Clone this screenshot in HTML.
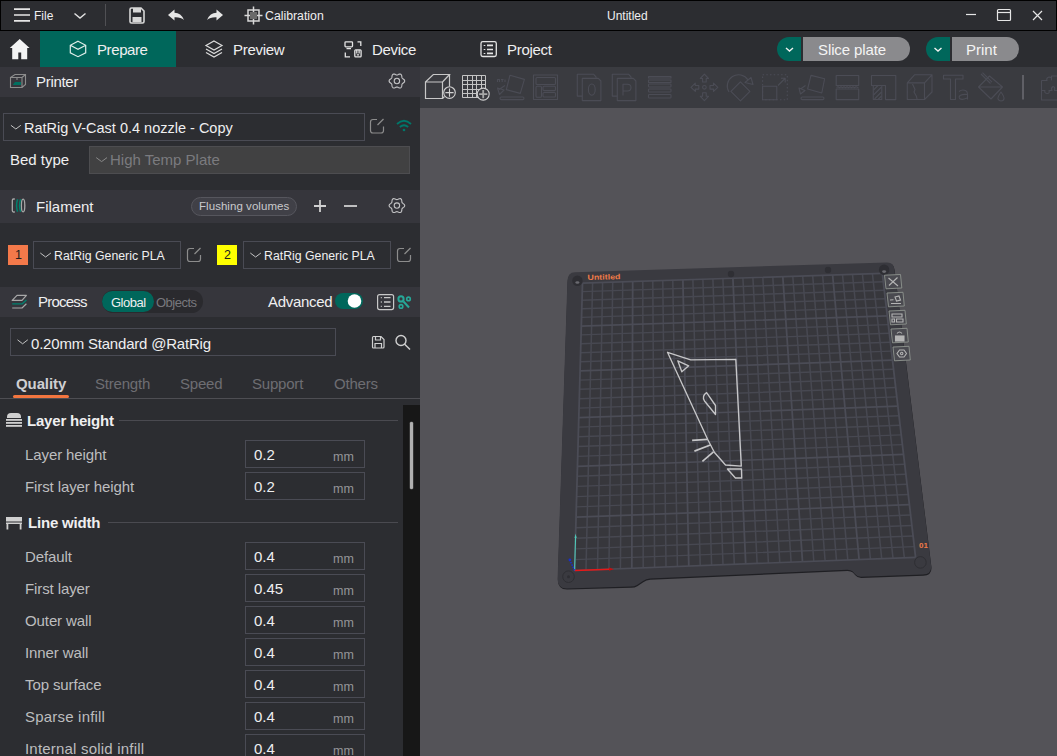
<!DOCTYPE html>
<html><head><meta charset="utf-8">
<style>
*{box-sizing:border-box;margin:0;padding:0}
html,body{width:1057px;height:756px;overflow:hidden;background:#000}
body{position:relative;font-family:"Liberation Sans",sans-serif;color:#efeff0}
.a{position:absolute}
.t{position:absolute;white-space:nowrap;line-height:1}
svg{position:absolute;overflow:visible}
</style></head><body>
<!-- title bar -->
<div class="a" style="left:1px;top:1px;width:1055px;height:29px;background:#2c2d31"></div>
<!-- tab bar -->
<div class="a" style="left:0;top:31px;width:1057px;height:36px;background:#2c2d31"></div>
<!-- sidebar bg -->
<div class="a" style="left:0;top:67px;width:420px;height:689px;background:#2c2d31"></div>
<!-- viewport -->
<div class="a" style="left:420px;top:67px;width:637px;height:689px;background:#545358"></div>
<div class="a" style="left:420px;top:67px;width:637px;height:41px;background:#3a3b40"></div>

<svg style="left:0;top:0" width="1057" height="31"><g stroke="#e6e6e6" stroke-width="2" fill="none"><path d="M14 9.1H30M14 15H30M14 20.8H30" stroke-width="1.7"/></g><path d="M74.5 13.5L80 18L85.5 13.5" stroke="#e0e0e0" stroke-width="1.5" fill="none"/><path d="M105.5 4V26" stroke="#505054" stroke-width="1"/><g fill="none" stroke="#d8d8d8" stroke-width="1.6"><path d="M130 9.5Q130 8 131.5 8H141L144 11V21.5Q144 23 142.5 23H131.5Q130 23 130 21.5Z"/></g><rect x="133" y="8" width="8" height="4.5" fill="#d8d8d8"/><rect x="132.5" y="17" width="9" height="5" fill="#d8d8d8"/><path d="M168 15L174.5 9.5V12.8Q181 12.8 184 20Q180.5 16.8 174.5 17.2V20.5Z" fill="#e6e6e6"/><path d="M223 15L216.5 9.5V12.8Q210 12.8 207 20Q210.5 16.8 216.5 17.2V20.5Z" fill="#e6e6e6"/><g fill="none" stroke="#d8d8d8" stroke-width="1.5"><rect x="248" y="10" width="11" height="11"/><path d="M253.5 6.5V24.5M244.5 15.5H262.5"/></g><rect x="250" y="12" width="7" height="7" fill="#6a6a6a"/><path d="M966 14.5H976" stroke="#e6e6e6" stroke-width="1.2"/><rect x="997.5" y="9.5" width="13" height="11" rx="1" fill="none" stroke="#e6e6e6" stroke-width="1.2"/><path d="M997.5 12.5H1010.5" stroke="#e6e6e6" stroke-width="1.2"/><path d="M1033 11L1042 20M1042 11L1033 20" stroke="#e6e6e6" stroke-width="1.2"/></svg>
<div class="t" style="left:34px;top:9.84px;font-size:12px;color:#efeff0;font-weight:400;">File</div>
<div class="t" style="left:265px;top:9.59px;font-size:12.3px;color:#efeff0;font-weight:400;">Calibration</div>
<div class="t" style="left:607px;top:9.84px;font-size:12px;color:#efeff0;font-weight:400;">Untitled</div>
<div class="a" style="left:40px;top:31px;width:136px;height:36px;background:#00675b;"></div>
<svg style="left:0;top:31px" width="600" height="36"><path d="M19.7 8L9.8 17H12.2V28.2H18.3V21.5H21.2V28.2H27.2V17H29.6Z" fill="#f4f4f4"/><g fill="none" stroke="#dfeeea" stroke-width="1.2"><path d="M78 10.3L85.7 14.3V21.9L78 25.7L70.3 21.9V14.3Z M70.3 14.3L78 18.3L85.7 14.3"/></g><g fill="none" stroke="#dcdcdc" stroke-width="1.2"><path d="M214 10L222 14.5L214 19L206 14.5Z"/><path d="M206 18L214 22.5L222 18M206 21.5L214 26L222 21.5"/></g><g fill="none" stroke="#e4e4e4" stroke-width="1.3"><rect x="345" y="10.8" width="7.5" height="5" rx="0.8"/><path d="M346.5 17.7H351M357.5 10.8H360.8V15M345.3 21.5V25.8H350"/><rect x="354.8" y="18.8" width="6.3" height="7" rx="0.9"/><path d="M356.8 19V22.5M359.1 19V22.5M356.8 23.8H359.1"/></g><g fill="none" stroke="#e4e4e4" stroke-width="1.3"><rect x="481" y="10.6" width="15.3" height="14.9" rx="1.8"/><path d="M484.5 13.9V14.9M484.5 18V19M484.5 21.9V22.9M487 14.4H493M487 18.5H493M487 22.4H493" stroke-width="1.6"/></g></svg>
<div class="t" style="left:97px;top:42.30px;font-size:15px;color:#efeff0;font-weight:400;letter-spacing:-0.4px">Prepare</div>
<div class="t" style="left:233px;top:42.30px;font-size:15px;color:#efeff0;font-weight:400;letter-spacing:-0.3px">Preview</div>
<div class="t" style="left:372px;top:42.30px;font-size:15px;color:#efeff0;font-weight:400;letter-spacing:-0.3px">Device</div>
<div class="t" style="left:507px;top:42.30px;font-size:15px;color:#efeff0;font-weight:400;letter-spacing:-0.3px">Project</div>
<div class="a" style="left:777px;top:37px;width:30px;height:24px;background:#00675b;border-radius:12px 0 0 12px"></div>
<div class="a" style="left:802px;top:37px;width:108px;height:24px;background:#8a8a8d;border-radius:0 12px 12px 0"></div>
<div class="a" style="left:801px;top:37px;width:1.5px;height:24px;background:#2c2d31;"></div>
<div class="a" style="left:926px;top:37px;width:30px;height:24px;background:#00675b;border-radius:12px 0 0 12px"></div>
<div class="a" style="left:951px;top:37px;width:68px;height:24px;background:#8a8a8d;border-radius:0 12px 12px 0"></div>
<div class="a" style="left:950px;top:37px;width:1.5px;height:24px;background:#2c2d31;"></div>
<svg style="left:0;top:0" width="1057" height="70"><g fill="none" stroke="#f0f0f0" stroke-width="1.4"><path d="M786 48L789.5 51L793 48"/><path d="M934.5 48L938 51L941.5 48"/></g></svg>
<div class="t" style="left:818px;top:42.30px;font-size:15px;color:#f4f4f4;font-weight:400;letter-spacing:-0.1px">Slice plate</div>
<div class="t" style="left:966px;top:42.30px;font-size:15px;color:#f4f4f4;font-weight:400;">Print</div>
<div class="a" style="left:0px;top:67px;width:420px;height:30px;background:#36363c;"></div>
<div class="a" style="left:0px;top:190px;width:420px;height:33px;background:#36363c;"></div>
<div class="a" style="left:0px;top:287px;width:420px;height:30px;background:#36363c;"></div>
<svg style="left:0;top:0" width="420" height="330"><g fill="none" stroke="#8c8c8c" stroke-width="1.1"><path d="M10.5 77.5H22V87.5H10.5Z M10.5 77.5L15 74.5H25.5V84.5L22 87.5M22 77.5L25.5 74.5"/><path d="M17 77.5V80"/></g><path d="M13 84.5L15 82H21V85H13Z" fill="#007060"/><g transform="translate(396.9,81)" fill="none" stroke="#c4c4c6" stroke-width="1.1"><path d="M7.80 0.00L7.65 0.67L7.24 1.28L6.66 1.79L6.06 2.21L5.55 2.59L5.20 3.00L5.01 3.51L4.94 4.15L4.88 4.88L4.72 5.63L4.40 6.29L3.90 6.75L3.25 6.96L2.51 6.91L1.79 6.66L1.12 6.35L0.53 6.10L0.00 6.00L-0.53 6.10L-1.12 6.35L-1.79 6.66L-2.51 6.91L-3.25 6.96L-3.90 6.75L-4.40 6.29L-4.72 5.63L-4.88 4.88L-4.94 4.15L-5.01 3.51L-5.20 3.00L-5.55 2.59L-6.06 2.21L-6.66 1.79L-7.24 1.28L-7.65 0.67L-7.80 0.00L-7.65 -0.67L-7.24 -1.28L-6.66 -1.79L-6.06 -2.21L-5.55 -2.59L-5.20 -3.00L-5.01 -3.51L-4.94 -4.15L-4.88 -4.88L-4.72 -5.63L-4.40 -6.29L-3.90 -6.75L-3.25 -6.96L-2.51 -6.91L-1.79 -6.66L-1.12 -6.35L-0.53 -6.10L-0.00 -6.00L0.53 -6.10L1.12 -6.35L1.79 -6.66L2.51 -6.91L3.25 -6.96L3.90 -6.75L4.40 -6.29L4.72 -5.63L4.88 -4.88L4.94 -4.15L5.01 -3.51L5.20 -3.00L5.55 -2.59L6.06 -2.21L6.66 -1.79L7.24 -1.28L7.65 -0.67L7.80 -0.00Z"/><circle r="2.7"/></g><rect x="3.5" y="113.5" width="361" height="27" fill="none" stroke="#4a4b54"/><path d="M10.9 125.3L15.85 129L20.8 125.3" fill="none" stroke="#c4c4c4" stroke-width="1"/><g fill="none" stroke="#8c8c8c" stroke-width="1.2"><path d="M377 119.5H373Q370.5 119.5 370.5 122V130.5Q370.5 133 373 133H381Q383.5 133 383.5 130.5V126.5"/><path d="M377.5 125L383.5 119"/></g><g fill="none" stroke="#00776a" stroke-width="1.8"><path d="M397 124Q404 117.5 411 124"/><path d="M399.8 127Q404 123.5 408.2 127"/></g><circle cx="404" cy="130" r="1.3" fill="#00776a"/><rect x="89.5" y="146.5" width="320" height="27" fill="#414142" stroke="#4d4d50"/><path d="M96.2 157.6L101.6 161.6L107 157.6" fill="none" stroke="#8a8a8a" stroke-width="1"/><g fill="none" stroke-width="1.3"><path d="M14.8 199H13.5Q12.3 199 12.3 200.5V210.5Q12.3 212 13.5 212H14.8" stroke="#a8a8a8"/><ellipse cx="23.1" cy="205.5" rx="1.7" ry="6.4" stroke="#a8a8a8"/><path d="M17.6 199.2Q15.6 205.5 17.6 211.8M20.6 199.2Q18.6 205.5 20.6 211.8" stroke="#00806e" stroke-width="1.5"/></g><rect x="191.5" y="197.5" width="105" height="18" rx="9" fill="#404047" stroke="#56565d"/><path d="M320 200V212M314 206H326" stroke="#d0d0d0" stroke-width="1.8"/><path d="M344 206H357" stroke="#d0d0d0" stroke-width="1.8"/><g transform="translate(396.9,205.6)" fill="none" stroke="#c4c4c6" stroke-width="1.1"><path d="M7.80 0.00L7.65 0.67L7.24 1.28L6.66 1.79L6.06 2.21L5.55 2.59L5.20 3.00L5.01 3.51L4.94 4.15L4.88 4.88L4.72 5.63L4.40 6.29L3.90 6.75L3.25 6.96L2.51 6.91L1.79 6.66L1.12 6.35L0.53 6.10L0.00 6.00L-0.53 6.10L-1.12 6.35L-1.79 6.66L-2.51 6.91L-3.25 6.96L-3.90 6.75L-4.40 6.29L-4.72 5.63L-4.88 4.88L-4.94 4.15L-5.01 3.51L-5.20 3.00L-5.55 2.59L-6.06 2.21L-6.66 1.79L-7.24 1.28L-7.65 0.67L-7.80 0.00L-7.65 -0.67L-7.24 -1.28L-6.66 -1.79L-6.06 -2.21L-5.55 -2.59L-5.20 -3.00L-5.01 -3.51L-4.94 -4.15L-4.88 -4.88L-4.72 -5.63L-4.40 -6.29L-3.90 -6.75L-3.25 -6.96L-2.51 -6.91L-1.79 -6.66L-1.12 -6.35L-0.53 -6.10L-0.00 -6.00L0.53 -6.10L1.12 -6.35L1.79 -6.66L2.51 -6.91L3.25 -6.96L3.90 -6.75L4.40 -6.29L4.72 -5.63L4.88 -4.88L4.94 -4.15L5.01 -3.51L5.20 -3.00L5.55 -2.59L6.06 -2.21L6.66 -1.79L7.24 -1.28L7.65 -0.67L7.80 -0.00Z"/><circle r="2.7"/></g><rect x="8" y="245" width="20" height="20" fill="#f4794a"/><rect x="33.5" y="241.5" width="147" height="27" fill="none" stroke="#4a4b54"/><path d="M40.3 253L45.6 257L50.9 253" fill="none" stroke="#c4c4c4" stroke-width="1"/><g fill="none" stroke="#8c8c8c" stroke-width="1.2"><path d="M194 248.5H190Q187.5 248.5 187.5 251V259Q187.5 261.5 190 261.5H198Q200.5 261.5 200.5 259V255"/><path d="M194.5 254L200.5 248"/></g><rect x="217" y="245" width="20" height="20" fill="#ffff00"/><rect x="243.5" y="241.5" width="147" height="27" fill="none" stroke="#4a4b54"/><path d="M250.3 253L255.6 257L260.9 253" fill="none" stroke="#c4c4c4" stroke-width="1"/><g fill="none" stroke="#8c8c8c" stroke-width="1.2"><path d="M404 248.5H400Q397.5 248.5 397.5 251V259Q397.5 261.5 400 261.5H408Q410.5 261.5 410.5 259V255"/><path d="M404.5 254L410.5 248"/></g><g fill="none" stroke-width="1.2" stroke-linejoin="round"><path d="M12.2 300.4L17 295.3H26.4L22 300.4Z" stroke="#a8a8a8"/><path d="M12.2 303.9H22L26.4 299.9" stroke="#00806e" stroke-width="1.4"/><path d="M12.2 308H22L26.4 303.8" stroke="#a8a8a8"/></g><rect x="102" y="290" width="101" height="23" rx="11.5" fill="#2a2a2e"/><rect x="102" y="291" width="52" height="21" rx="10.5" fill="#00675b"/><rect x="335" y="293" width="28" height="16" rx="8" fill="#00675b"/><circle cx="354.5" cy="301" r="6.8" fill="#ffffff"/><g fill="none" stroke="#c8c8c8" stroke-width="1.2"><rect x="377.6" y="294.6" width="16" height="15" rx="2"/><path d="M380.8 297.6H381.8M380.8 302H381.8M380.8 306.3H381.8M384 297.6H390.5M384 302H390.5M384 306.3H390.5" stroke-width="1.3"/></g><g fill="none" stroke="#26a898"><circle cx="401" cy="298.9" r="2.6" stroke-width="2"/><circle cx="408.5" cy="298.9" r="1.8" stroke-width="1.6"/><circle cx="401" cy="306.4" r="1.8" stroke-width="1.6"/><path d="M403.5 301.5L409 307.5" stroke-width="2"/></g></svg>
<div class="t" style="left:36px;top:74.30px;font-size:15px;color:#efeff0;font-weight:400;letter-spacing:-0.3px">Printer</div>
<div class="t" style="left:24px;top:120.73px;font-size:14.5px;color:#efeff0;font-weight:400;">RatRig V-Cast 0.4 nozzle - Copy</div>
<div class="t" style="left:10px;top:152.30px;font-size:15px;color:#efeff0;font-weight:400;">Bed type</div>
<div class="t" style="left:110px;top:152.30px;font-size:15px;color:#7b7b7f;font-weight:400;">High Temp Plate</div>
<div class="t" style="left:36px;top:199.30px;font-size:15px;color:#efeff0;font-weight:400;">Filament</div>
<div class="t" style="left:199px;top:201.27px;font-size:11.5px;color:#c9c9cc;font-weight:400;letter-spacing:0.05px">Flushing volumes</div>
<div class="t" style="left:15px;top:249.42px;font-size:12.5px;color:#202020;font-weight:400;">1</div>
<div class="t" style="left:224px;top:249.42px;font-size:12.5px;color:#202020;font-weight:400;">2</div>
<div class="t" style="left:54px;top:249.59px;font-size:12.3px;color:#efeff0;font-weight:400;">RatRig Generic PLA</div>
<div class="t" style="left:264px;top:249.59px;font-size:12.3px;color:#efeff0;font-weight:400;">RatRig Generic PLA</div>
<div class="t" style="left:38px;top:294.30px;font-size:15px;color:#efeff0;font-weight:400;letter-spacing:-0.8px">Process</div>
<div class="t" style="left:111px;top:295.50px;font-size:13px;color:#efeff0;font-weight:400;letter-spacing:-0.5px">Global</div>
<div class="t" style="left:156px;top:295.50px;font-size:13px;color:#78787d;font-weight:400;letter-spacing:-0.5px">Objects</div>
<div class="t" style="left:268px;top:294.30px;font-size:15px;color:#efeff0;font-weight:400;letter-spacing:-0.3px">Advanced</div>
<svg style="left:0;top:320px" width="420" height="440"><rect x="10.5" y="8.5" width="325" height="27" fill="none" stroke="#4a4b54"/><path d="M17.5 19.8L22.6 23.8L27.8 19.8" fill="none" stroke="#c4c4c4" stroke-width="1"/><g fill="none" stroke="#d0d0d0" stroke-width="1.2"><path d="M372.5 17.5Q372.5 16.5 373.5 16.5H381L384 19.5V27Q384 28 383 28H373.5Q372.5 28 372.5 27Z"/><path d="M375.5 16.5V20H380.5V16.5M375 28V23.5H381.5V28"/></g><g fill="none" stroke="#d0d0d0" stroke-width="1.4"><circle cx="401" cy="20.5" r="5"/><path d="M404.7 24.2L410 29.5"/></g><rect x="13" y="75" width="56" height="3.2" rx="1.6" fill="#f2753f"/><path d="M0 78.5H420" stroke="#4e4e53" stroke-width="1"/></svg>
<div class="t" style="left:31px;top:336.30px;font-size:15px;color:#efeff0;font-weight:400;letter-spacing:-0.2px">0.20mm Standard @RatRig</div>
<div class="t" style="left:16px;top:376.30px;font-size:15px;color:#cfcfd1;font-weight:700;letter-spacing:-0.1px">Quality</div>
<div class="t" style="left:95px;top:376.30px;font-size:15px;color:#6e6e73;font-weight:400;letter-spacing:-0.2px">Strength</div>
<div class="t" style="left:180px;top:376.30px;font-size:15px;color:#6e6e73;font-weight:400;letter-spacing:-0.2px">Speed</div>
<div class="t" style="left:252px;top:376.30px;font-size:15px;color:#6e6e73;font-weight:400;letter-spacing:-0.2px">Support</div>
<div class="t" style="left:334px;top:376.30px;font-size:15px;color:#6e6e73;font-weight:400;letter-spacing:-0.2px">Others</div>
<div class="a" style="left:403px;top:405px;width:17px;height:351px;background:#171717;"></div>
<div class="a" style="left:410.3px;top:422px;width:2.6px;height:67px;background:#b0b0b0;border-radius:1.3px;box-shadow:0 0 0 0.5px #555"></div>
<svg style="left:0;top:400px" width="403" height="356"><g fill="#d0d0d0"><path d="M7 17Q7 13 11 13H17Q21 13 21 17V18H7Z"/><rect x="6" y="19" width="16" height="1.8"/><rect x="6" y="22" width="16" height="1.8"/><rect x="6" y="25" width="16" height="1.8"/></g><path d="M119 20.5H398" stroke="#4a4a50" stroke-width="1"/><g fill="#d0d0d0"><rect x="6" y="117" width="16" height="4.5"/><rect x="6" y="122.5" width="16" height="1.5"/><rect x="6.5" y="124" width="1.8" height="5.5"/><rect x="19.7" y="124" width="1.8" height="5.5"/></g><path d="M108 122.5H398" stroke="#4a4a50" stroke-width="1"/></svg>
<div class="t" style="left:27px;top:413.30px;font-size:15px;color:#efeff0;font-weight:700;letter-spacing:-0.2px">Layer height</div>
<div class="t" style="left:28px;top:515.30px;font-size:15px;color:#efeff0;font-weight:700;letter-spacing:-0.2px">Line width</div>
<div class="t" style="left:25px;top:447.30px;font-size:15px;color:#bdbdbf;font-weight:400;letter-spacing:-0.1px">Layer height</div>
<div class="t" style="left:254px;top:447.30px;font-size:15px;color:#efeff0;font-weight:400;">0.2</div>
<div class="t" style="left:333px;top:451.42px;font-size:12.5px;color:#959598;font-weight:400;">mm</div>
<div class="t" style="left:25px;top:479.30px;font-size:15px;color:#bdbdbf;font-weight:400;letter-spacing:-0.1px">First layer height</div>
<div class="t" style="left:254px;top:479.30px;font-size:15px;color:#efeff0;font-weight:400;">0.2</div>
<div class="t" style="left:333px;top:483.42px;font-size:12.5px;color:#959598;font-weight:400;">mm</div>
<div class="t" style="left:25px;top:549.30px;font-size:15px;color:#bdbdbf;font-weight:400;letter-spacing:-0.1px">Default</div>
<div class="t" style="left:254px;top:549.30px;font-size:15px;color:#efeff0;font-weight:400;">0.4</div>
<div class="t" style="left:333px;top:553.42px;font-size:12.5px;color:#959598;font-weight:400;">mm</div>
<div class="t" style="left:25px;top:581.30px;font-size:15px;color:#bdbdbf;font-weight:400;letter-spacing:-0.1px">First layer</div>
<div class="t" style="left:254px;top:581.30px;font-size:15px;color:#efeff0;font-weight:400;">0.45</div>
<div class="t" style="left:333px;top:585.42px;font-size:12.5px;color:#959598;font-weight:400;">mm</div>
<div class="t" style="left:25px;top:613.30px;font-size:15px;color:#bdbdbf;font-weight:400;letter-spacing:-0.1px">Outer wall</div>
<div class="t" style="left:254px;top:613.30px;font-size:15px;color:#efeff0;font-weight:400;">0.4</div>
<div class="t" style="left:333px;top:617.42px;font-size:12.5px;color:#959598;font-weight:400;">mm</div>
<div class="t" style="left:25px;top:645.30px;font-size:15px;color:#bdbdbf;font-weight:400;letter-spacing:-0.1px">Inner wall</div>
<div class="t" style="left:254px;top:645.30px;font-size:15px;color:#efeff0;font-weight:400;">0.4</div>
<div class="t" style="left:333px;top:649.42px;font-size:12.5px;color:#959598;font-weight:400;">mm</div>
<div class="t" style="left:25px;top:677.30px;font-size:15px;color:#bdbdbf;font-weight:400;letter-spacing:-0.1px">Top surface</div>
<div class="t" style="left:254px;top:677.30px;font-size:15px;color:#efeff0;font-weight:400;">0.4</div>
<div class="t" style="left:333px;top:681.42px;font-size:12.5px;color:#959598;font-weight:400;">mm</div>
<div class="t" style="left:25px;top:709.30px;font-size:15px;color:#bdbdbf;font-weight:400;letter-spacing:0.2px">Sparse infill</div>
<div class="t" style="left:254px;top:709.30px;font-size:15px;color:#efeff0;font-weight:400;">0.4</div>
<div class="t" style="left:333px;top:713.42px;font-size:12.5px;color:#959598;font-weight:400;">mm</div>
<div class="t" style="left:25px;top:741.30px;font-size:15px;color:#bdbdbf;font-weight:400;letter-spacing:0.2px">Internal solid infill</div>
<div class="t" style="left:254px;top:741.30px;font-size:15px;color:#efeff0;font-weight:400;">0.4</div>
<div class="t" style="left:333px;top:745.42px;font-size:12.5px;color:#959598;font-weight:400;">mm</div>
<svg style="left:0;top:0" width="403" height="756"><rect x="245.5" y="440.5" width="119" height="27" fill="none" stroke="#4a4b54"/><rect x="245.5" y="472.5" width="119" height="27" fill="none" stroke="#4a4b54"/><rect x="245.5" y="542.5" width="119" height="27" fill="none" stroke="#4a4b54"/><rect x="245.5" y="574.5" width="119" height="27" fill="none" stroke="#4a4b54"/><rect x="245.5" y="606.5" width="119" height="27" fill="none" stroke="#4a4b54"/><rect x="245.5" y="638.5" width="119" height="27" fill="none" stroke="#4a4b54"/><rect x="245.5" y="670.5" width="119" height="27" fill="none" stroke="#4a4b54"/><rect x="245.5" y="702.5" width="119" height="27" fill="none" stroke="#4a4b54"/><rect x="245.5" y="734.5" width="119" height="27" fill="none" stroke="#4a4b54"/></svg>
<svg style="left:0;top:0" width="1057" height="756"><path d="M575 272.2 L887 262.4 Q894 262.3 894.4 269.5 L931.1 565.5 Q932 574.3 923 574.6 L861 576.8 Q857.5 576.9 855 574 L852.5 571.3 Q850.5 569.7 847 569.8 L650 578.6 Q646 578.8 643 581 L637 585 Q634.5 586.5 631 586.6 L567 588.4 Q557.4 588.6 557.6 578.5 L567.4 281 Q567.6 272.4 575 272.2 Z" fill="#1f1f23" transform="translate(0.3 1.2)"/><path d="M575 272.2 L887 262.4 Q894 262.3 894.4 269.5 L931.1 565.5 Q932 574.3 923 574.6 L861 576.8 Q857.5 576.9 855 574 L852.5 571.3 Q850.5 569.7 847 569.8 L650 578.6 Q646 578.8 643 581 L637 585 Q634.5 586.5 631 586.6 L567 588.4 Q557.4 588.6 557.6 578.5 L567.4 281 Q567.6 272.4 575 272.2 Z" fill="#3a3a40"/><path d="M585.5 283.1 L879.3 273.5 Q882.3 273.4 882.7 276.4 L915.6 554.3 Q915.8 557.2 912.6 557.4 L577.6 570.4 Q574.6 570.5 574.6 567.5 L582.4 286.2 Q582.5 283.2 585.5 283.1Z" fill="#37373c"/><path d="M582.3 291.6L883.3 281.8M582.0 300.2L884.3 290.2M581.8 308.8L885.3 298.7M581.6 317.4L886.3 307.2M581.1 334.9L888.3 324.6M580.8 343.8L889.3 333.3M580.6 352.8L890.4 342.2M580.3 361.8L891.4 351.1M579.8 380.1L893.5 369.2M579.6 389.3L894.6 378.3M579.3 398.7L895.7 387.5M579.1 408.1L896.8 396.9M578.5 427.1L899.0 415.7M578.3 436.8L900.1 425.2M578.0 446.5L901.2 434.9M577.7 456.4L902.4 444.6M577.2 476.3L904.7 464.3M576.9 486.4L905.9 474.2M576.6 496.6L907.0 484.3M576.4 506.9L908.2 494.5M575.8 527.7L910.6 515.0M575.5 538.2L911.9 525.5M575.2 548.9L913.1 536.0M574.9 559.6L914.3 546.6" stroke="#474851" stroke-width="1.45" fill="none"/><path d="M592.6 282.9L586.0 570.1M602.6 282.5L597.5 569.6M612.7 282.2L608.9 569.2M622.7 281.9L620.4 568.7M642.8 281.2L643.2 567.8M652.8 280.9L654.6 567.4M662.8 280.6L666.0 567.0M672.8 280.2L677.4 566.5M692.9 279.6L700.2 565.6M702.9 279.3L711.6 565.2M712.9 278.9L723.0 564.8M722.9 278.6L734.3 564.3M742.9 278.0L757.1 563.4M752.9 277.6L768.4 563.0M762.8 277.3L779.8 562.6M772.8 277.0L791.1 562.1M792.8 276.3L813.8 561.2M802.7 276.0L825.1 560.8M812.7 275.7L836.5 560.4M822.6 275.4L847.8 559.9M842.5 274.7L870.4 559.0M852.5 274.4L881.7 558.6M862.4 274.0L893.0 558.2M872.4 273.7L904.3 557.7" stroke="#474851" stroke-width="1.55" fill="none"/><path d="M582.5 283.2L882.3 273.4M581.3 326.1L887.3 315.9M580.1 370.9L892.5 360.1M578.8 417.6L897.9 406.2M577.5 466.3L903.5 454.4M576.1 517.2L909.4 504.7M574.6 570.5L915.6 557.3" stroke="#4b4c56" stroke-width="1.7" fill="none"/><path d="M582.5 283.2L574.6 570.5M632.7 281.6L631.8 568.3M682.9 279.9L688.8 566.1M732.9 278.3L745.7 563.9M782.8 276.7L802.5 561.7M832.6 275.0L859.1 559.5M882.3 273.4L915.6 557.3" stroke="#4b4c56" stroke-width="1.8" fill="none"/><circle cx="577.4" cy="280.7" r="5.2" fill="#2e2e33"/><ellipse cx="577.4" cy="282.5" rx="2" ry="1.3" fill="#6a6a70"/><circle cx="884.1" cy="269.8" r="5.2" fill="#2e2e33"/><ellipse cx="884.1" cy="271.6" rx="2" ry="1.3" fill="#6a6a70"/><circle cx="731" cy="274" r="3.2" fill="#2f2f34"/><circle cx="828" cy="270" r="3.2" fill="#2f2f34"/><circle cx="568.5" cy="576.7" r="5.8" fill="none" stroke="#2e2e33" stroke-width="1"/><circle cx="568.5" cy="576.7" r="1.5" fill="#2e2e33"/><circle cx="920.4" cy="562.4" r="5.8" fill="none" stroke="#2e2e33" stroke-width="1"/><path d="M574.6 570.5L575.6 536" stroke="#50c8b8" stroke-width="1.1"/><path d="M574.5 538L575.6 533.5L576.6 538Z" fill="#50c8b8"/><path d="M574.6 570.5L611 569.3" stroke="#e81818" stroke-width="1.5"/><path d="M609 567.6L614 569.2L609 570.8Z" fill="#c01010"/><path d="M574.6 570.5L569.5 559.5" stroke="#1830d0" stroke-width="1.5" stroke-dasharray="1.6 1"/><circle cx="569.8" cy="559.8" r="1.3" fill="#1830d0"/><g fill="none" stroke="#c6c6c8" stroke-width="1.35" stroke-linejoin="round"><path d="M667.5 352.3L690.7 359.9L735.8 359.3L741.3 466.1L725.5 465L714.5 452.5L707.6 439.3Z"/><path d="M727.4 469L741.5 469L741.7 478L735.4 478Z"/><path d="M677.8 360.8L688.7 365.8L681.8 371.8Z"/><path d="M706.6 392.6Q701.5 396 704.5 401L715.5 414.5L715.5 405.5Z"/><path d="M692.1 440.3L707.6 439.3M694.4 451.1L711 444.8M702.4 461.4L713.5 451.9" stroke-width="1.7"/></g><text x="587.5" y="280" font-family="Liberation Sans" font-weight="700" font-size="7.5" fill="#f07a48" transform="rotate(-1.5 587.5 280)" textLength="33" lengthAdjust="spacingAndGlyphs">Untitled</text><text x="919" y="548" font-family="Liberation Sans" font-weight="700" font-size="8" fill="#f07a48">01</text><g fill="#4a4a50" stroke="#8e948e" stroke-width="0.9"><path d="M884.5 275.2L900.5 274.5L901.8 288L886 288.8Z"/><path d="M887 293L903 292.3L904.3 306L888.5 306.8Z"/><path d="M889 311L905 310.3L906.3 324L890.5 324.8Z"/><path d="M891 329L907 328.3L908.3 342L892.5 342.8Z"/><path d="M893 347L909 346.3L910.3 360L894.5 360.8Z"/></g><g fill="none" stroke="#b4b4b4" stroke-width="1.1"><path d="M888.5 278L898 286M897.5 277.5L889 285.5"/><path d="M890 300L893.5 299.8M895 297L899 296L900.5 300L896.5 301ZM891 303.5H901"/><path d="M892 314H902V317H892ZM892 319H894.5V322H892ZM896.5 319H903V322H896.5Z"/><path d="M897 333.5Q899.5 330.5 902 333.5"/><rect x="895.5" y="336" width="8.5" height="5" fill="#b4b4b4"/><path d="M897 353.5L899.5 350H904L906.5 353.5L904 357H899.5Z"/><circle cx="901.7" cy="353.5" r="1.2"/></g></svg>
<svg style="left:0;top:0" width="1057" height="110"><g fill="none" stroke="#c8c8c8" stroke-width="1.2"><path d="M425.5 82H442.5V98.5H425.5Z M425.5 82L433.3 74.5H449.5L442.5 82 M449.5 74.5V86.5 M442.5 98.5L444.5 96.5"/></g><circle cx="449.5" cy="92.6" r="5.8" fill="#3b3b40" stroke="#d2d2d2" stroke-width="1.1"/><path d="M449.5 88.5V96.7M445.4 92.6H453.6" stroke="#d2d2d2" stroke-width="1.1"/><g fill="none" stroke="#c4c4c4" stroke-width="1"><path d="M462.5 75.5H485.5V97.5H462.5Z M467.5 75.5V97.5M472.5 75.5V97.5M476.5 75.5V97.5M481.5 75.5V97.5 M462.5 80.5H485.5M462.5 84.5H485.5M462.5 89.5H485.5M462.5 93.5H485.5"/></g><circle cx="483.2" cy="94.1" r="6" fill="#3b3b40" stroke="#d0d0d0" stroke-width="1.1"/><path d="M483.2 90V98.2M479.1 94.1H487.3" stroke="#a8a8a8" stroke-width="1.8"/><g fill="none" stroke="#4b4c55" stroke-width="1.1" stroke-linejoin="round"><path d="M510 75.2L524.4 79.4L520.3 93.4L506.3 89.6Z"/><path d="M505 85.5L499 89.5M497.5 88L499.5 94.5L504 90Z"/><rect x="500" y="97" width="24" height="2.6" rx="1.3"/><path d="M497.5 82V79.5H499.5V82M501 79.5H503.5M502.2 79.5V82M505 79.5V82"/><rect x="533.5" y="75" width="24" height="24.5"/><rect x="536" y="77.5" width="19.5" height="7" rx="1"/><rect x="536" y="86.3" width="5.5" height="11" rx="1"/><rect x="543" y="86.3" width="12.5" height="4.3" rx="1"/><rect x="543" y="92.5" width="12.5" height="4.5" rx="1"/><path d="M582.3 96.1H577.3V74.2H593.5L596 76.8V78.4"/><path d="M582.3 78.4H598.3L600.9 81V100.6H582.3Z"/><ellipse cx="591.8" cy="89.6" rx="3.4" ry="5.6"/><path d="M617.3 96.1H612.3V74.2H628.5L631 76.8V78.4"/><path d="M617.3 78.4H633.3L635.9 81V100.6H617.3Z"/><path d="M623 95.5V84.2H627.5Q631 84.2 631 87.6Q631 91 627.5 91H623"/><rect x="648.5" y="76.5" width="22.5" height="1.5"/><rect x="648.5" y="80" width="22.5" height="2.5"/><rect x="648.5" y="84" width="22.5" height="3" rx="0.8"/><rect x="648.5" y="89" width="22.5" height="3" rx="0.8"/><rect x="648.5" y="94.5" width="22.5" height="3.5" rx="0.8"/><circle cx="704.4" cy="87.3" r="1.8"/><path d="M704.4 74.2L700.3 78.5H702.6V82H706.2V78.5H708.5Z"/><path d="M704.4 100.6L700.3 96.3H702.6V92.8H706.2V96.3H708.5Z"/><path d="M691 87.3L695.3 83.2V85.5H698.8V89.1H695.3V91.4Z"/><path d="M717.8 87.3L713.5 83.2V85.5H710V89.1H713.5V91.4Z"/><path d="M729 92A10.5 10.5 0 0 1 748 80"/><path d="M745 82.5L751 77.5L753 84.5Z"/><path d="M740.4 81.8L749.9 91.3L740.4 100.8L730.9 91.3Z"/><path d="M762.6 74.8H787.3V99.8H762.6Z" stroke-dasharray="1.5 2.2"/><rect x="762.6" y="86.2" width="14.2" height="13.6"/><path d="M778 85.5L785 78.5M781 78.3H785.2V82.5"/><path d="M811 75.4L824.6 78.8L821.8 93L807.6 89Z"/><path d="M805.5 85.5L800.5 89M799 88L800.5 94L805 90.5Z"/><rect x="801" y="97" width="23" height="2.6" rx="1.3"/><rect x="836.2" y="75.5" width="22.5" height="10"/><rect x="836.2" y="89" width="22.5" height="10.6"/><path d="M836.5 87.5L838 86.8L839.5 87.8L841 86.8L842.5 87.8L844 86.8L845.5 87.8L847 86.8L848.5 87.8L850 86.8L851.5 87.8L853 86.8L854.5 87.8L856 86.8L858.5 87.8"/><path d="M871.5 75.5H895.8V99.6H885.5V85.5H871.5Z"/><rect x="873.3" y="85.5" width="8.5" height="14"/><path d="M873.5 90L878 85.5M873.5 95L881.5 87M874.5 99L881.5 92M878 99.5L881.5 96"/><path d="M907.3 82.9H924.5V99.5H907.3Z M907.3 82.9L914.5 74.8H932V92L924.5 99.5 M924.5 82.9L932 74.8"/><path d="M912.5 84L915 89.5L914 92L916.5 96.5L917 99"/><path d="M943.5 75.2H963V79H955.5V99.5H950.5V79H943.5Z"/><path d="M959 91.5Q962 89 965.5 90.5Q967.5 91.5 967.5 94V99.5M967 94.5Q963 94 960 95.5Q958.5 97 959.5 98.5Q962 100.5 967 98"/><path d="M981 74L990.5 83.5M982.5 72.7L992 82.2"/><path d="M978.5 87L989.5 76L1002.5 87L991 99Z M979 87H1002"/><path d="M1001 92Q997.5 97 998 99Q999 101 1001 101Q1003.5 101 1004 99Q1004.5 97 1001 92Z"/><path d="M1041.5 80.5H1047Q1046 78 1049 77Q1052 77 1051.5 80V76H1057M1041.5 80.5V100H1057M1041.5 90.5H1045Q1044 93 1047 93.5Q1050 93.5 1049 90.5H1052Q1050.5 88 1053 86.5Q1055.5 87 1054.5 90.5H1057"/></g><path d="M1023 75V99.5" stroke="#6a6a70" stroke-width="1.6"/></svg>
</body></html>
